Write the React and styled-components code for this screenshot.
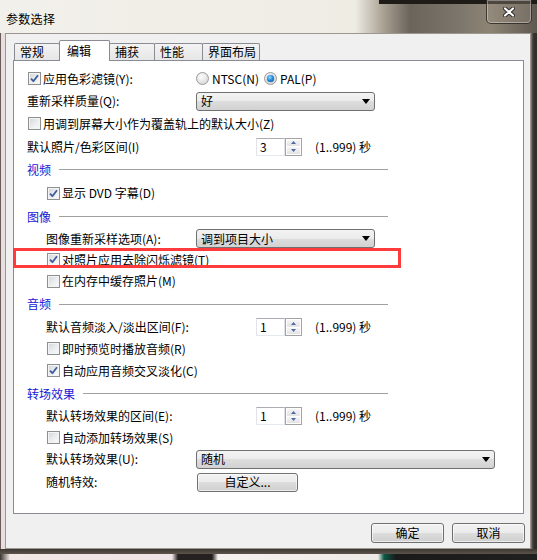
import React from "react";
import styled, { createGlobalStyle } from "styled-components";

const tabs = [
  { label: "常规", w: 46 },
  { label: "编辑", w: 51, active: true },
  { label: "捕获", w: 46 },
  { label: "性能", w: 49 },
  { label: "界面布局", w: 58 },
];

const CheckIcon = () => (
  <svg width="9" height="9" viewBox="0 0 9 9">
    <path d="M1 4.6 L3.4 7.2 L8 1.2" fill="none" stroke="#3f5b9a" strokeWidth="1.8" strokeLinejoin="round" />
  </svg>
);

const Check = ({ checked, children }) => (
  <CheckLabel>
    <Box>{checked && <CheckIcon />}</Box>
    <span>{children}</span>
  </CheckLabel>
);

const Radio = ({ on, children, w }) => (
  <RadioLabel $w={w}>
    <RadioDot $on={on} />
    <span>{children}</span>
  </RadioLabel>
);

const Arrow = () => (
  <svg width="8" height="5" viewBox="0 0 8 5">
    <path d="M0 0 H8 L4 5 Z" fill="#000" />
  </svg>
);

const Dropdown = ({ w, value }) => (
  <Select $w={w}>
    <span>{value}</span>
    <Arrow />
  </Select>
);

const Spinner = ({ value }) => (
  <>
    <Spin>
      <SpinInput>{value}</SpinInput>
      <SpinButtons>
        <SpinHalf>
          <svg width="5" height="3" viewBox="0 0 5 3"><path d="M0 3 L2.5 0 L5 3 Z" fill="#4e6aa6" /></svg>
        </SpinHalf>
        <SpinHalf>
          <svg width="5" height="3" viewBox="0 0 5 3"><path d="M0 0 H5 L2.5 3 Z" fill="#4e6aa6" /></svg>
        </SpinHalf>
      </SpinButtons>
    </Spin>
    <Suffix>(1..999) 秒</Suffix>
  </>
);

const App = () => {
  return (
    <>
      <GlobalStyle />
      <Window>
        <TitleBar>
          <Title>参数选择</Title>
          <Close>
            <svg width="12" height="10" viewBox="0 0 12 10">
              <path d="M2 1.5 L10 8.5 M10 1.5 L2 8.5" stroke="#2b2b2b" strokeWidth="4" strokeLinecap="round" />
              <path d="M2 1.5 L10 8.5 M10 1.5 L2 8.5" stroke="#fff" strokeWidth="2.2" strokeLinecap="round" />
            </svg>
          </Close>
        </TitleBar>

        <Client>
          <TabRow>
            {tabs.map((t) => (
              <Tab key={t.label} $w={t.w} $active={t.active}>
                {t.label}
              </Tab>
            ))}
          </TabRow>

          <Panel>
            <Row $h={23}>
              <LabelCell>
                <Check checked>应用色彩滤镜(Y):</Check>
              </LabelCell>
              <Radio w={68}>NTSC(N)</Radio>
              <Radio on>PAL(P)</Radio>
            </Row>
            <Row $h={22}>
              <LabelCell>重新采样质量(Q):</LabelCell>
              <Dropdown w={179} value="好" />
            </Row>
            <Row $h={23}>
              <Check>用调到屏幕大小作为覆盖轨上的默认大小(Z)</Check>
            </Row>
            <Row $h={23}>
              <LabelCell>默认照片/色彩区间(I)</LabelCell>
              <Spinner value="3" />
            </Row>

            <Section $h={23}>视频</Section>
            <Row $h={24} $indent>
              <Check checked>显示 DVD 字幕(D)</Check>
            </Row>

            <Section $h={23}>图像</Section>
            <Row $h={21} $indent>
              <LabelCell $indent>图像重新采样选项(A):</LabelCell>
              <Dropdown w={179} value="调到项目大小" />
            </Row>
            <Row $h={21} $indent>
              <Check checked>对照片应用去除闪烁滤镜(T)</Check>
            </Row>
            <Row $h={22} $indent>
              <Check>在内存中缓存照片(M)</Check>
            </Row>

            <Section $h={24}>音频</Section>
            <Row $h={22} $indent>
              <LabelCell $indent>默认音频淡入/淡出区间(F):</LabelCell>
              <Spinner value="1" />
            </Row>
            <Row $h={21} $indent>
              <Check>即时预览时播放音频(R)</Check>
            </Row>
            <Row $h={23} $indent>
              <Check checked>自动应用音频交叉淡化(C)</Check>
            </Row>

            <Section $h={23}>转场效果</Section>
            <Row $h={22} $indent>
              <LabelCell $indent>默认转场效果的区间(E):</LabelCell>
              <Spinner value="1" />
            </Row>
            <Row $h={21} $indent>
              <Check>自动添加转场效果(S)</Check>
            </Row>
            <Row $h={22} $indent>
              <LabelCell $indent>默认转场效果(U):</LabelCell>
              <Dropdown w={299} value="随机" />
            </Row>
            <Row $h={24} $indent>
              <LabelCell $indent>随机特效:</LabelCell>
              <PushButton $w={101} $h={19} $offset={1}>自定义...</PushButton>
            </Row>

            <Highlight />
          </Panel>

          <ButtonRow>
            <PushButton $w={73} $h={20}>确定</PushButton>
            <PushButton $w={73} $h={20}>取消</PushButton>
          </ButtonRow>
        </Client>

        <BottomEdge />
      </Window>
    </>
  );
};

export default App;

const GlobalStyle = createGlobalStyle`
  html, body {
    margin: 0;
    padding: 0;
  }
  body {
    width: 537px;
    height: 560px;
    overflow: hidden;
    background: #2a2521;
    color: #000;
    font-family: "Noto Sans CJK SC", "Noto Sans", sans-serif;
    font-size: 12px;
  }
`;

const Window = styled.div`
  display: flex;
  flex-direction: column;
  width: 537px;
  height: 560px;
  background: linear-gradient(
    90deg,
    #6b5a57 0,
    #6b5a57 1px,
    #e6dfdf 1px,
    #e6dfdf 5px,
    #4a443e 5px,
    #8d877f 531px,
    #5a544d 532px,
    #332e29 534px
  );
`;

const TitleBar = styled.div`
  display: flex;
  flex: none;
  align-items: center;
  justify-content: space-between;
  height: 33px;
  padding-left: 6px;
  background:
    linear-gradient(#1f1c18, #1f1c18) right top / 158px 4px no-repeat,
    linear-gradient(
      90deg,
      #f2f0eb 0,
      #efece4 355px,
      #a59d8f 385px,
      #6a645b 410px,
      #7a746b 455px,
      #8d8474 490px,
      #5e5850 537px
    );
`;

const Title = styled.span`
  margin-top: 3px;
  font-size: 12px;
  letter-spacing: 0.3px;
`;

const Close = styled.div`
  display: flex;
  align-items: center;
  justify-content: center;
  align-self: flex-start;
  box-sizing: border-box;
  width: 46px;
  height: 24px;
  margin-right: 5px;
  border: 1px solid rgba(40, 36, 30, 0.8);
  border-top: none;
  border-radius: 0 0 5px 5px;
  background: rgba(160, 150, 135, 0.35);
  box-shadow: inset 0 0 0 1px rgba(255, 255, 255, 0.35);
`;

const Client = styled.div`
  display: flex;
  flex-direction: column;
  box-sizing: border-box;
  height: 516px;
  margin: 0 6px 0 5px;
  padding: 6px 6px 0 7px;
  background: #f0f0f0;
  border: 1px solid #9c9791;
`;

const TabRow = styled.div`
  display: flex;
  align-items: flex-end;
  height: 20px;
  padding-left: 1px;
`;

const Tab = styled.div`
  position: relative;
  z-index: ${(p) => (p.$active ? 2 : 1)};
  box-sizing: border-box;
  width: ${(p) => p.$w}px;
  height: ${(p) => (p.$active ? 21 : 17)}px;
  margin-left: -1px;
  margin-bottom: ${(p) => (p.$active ? -1 : 0)}px;
  padding-left: ${(p) => (p.$active ? 7 : 5)}px;
  display: flex;
  align-items: center;
  border: 1px solid #898c95;
  border-bottom: none;
  border-radius: 2px 2px 0 0;
  background: ${(p) => (p.$active ? "#fff" : "linear-gradient(#f3f3f3, #e6e6e6)")};
  line-height: 1;
  &:first-child {
    margin-left: 0;
  }
`;

const Panel = styled.div`
  position: relative;
  box-sizing: border-box;
  height: 454px;
  padding: 6px 0 0 13px;
  background: #fff;
  border: 1px solid #898c95;
  line-height: 1;
  white-space: nowrap;
`;

const Row = styled.div`
  display: flex;
  align-items: center;
  height: ${(p) => p.$h}px;
  padding-left: ${(p) => (p.$indent ? 19 : 0)}px;
`;

const LabelCell = styled.div`
  display: flex;
  flex: none;
  align-items: center;
  width: ${(p) => (p.$indent ? 150 : 169)}px;
`;

const Section = styled.div`
  display: flex;
  align-items: center;
  gap: 8px;
  width: 361px;
  height: ${(p) => p.$h}px;
  color: #1717d4;
  &::after {
    content: "";
    flex: 1;
    height: 1px;
    background: #a0a0a0;
  }
`;

const CheckLabel = styled.label`
  display: inline-flex;
  align-items: center;
  gap: 2px;
  margin-left: 1px;
`;

const Box = styled.span`
  display: inline-flex;
  align-items: center;
  justify-content: center;
  box-sizing: border-box;
  width: 13px;
  height: 13px;
  border: 1px solid #8e8f8f;
  background: linear-gradient(135deg, #d2d4d8 0, #eceef0 55%, #fafafa 100%);
  box-shadow: inset 0 0 0 1px #f4f4f4;
`;

const RadioLabel = styled.label`
  display: inline-flex;
  align-items: center;
  gap: 3px;
  width: ${(p) => (p.$w ? `${p.$w}px` : "auto")};
`;

const RadioDot = styled.span`
  display: inline-flex;
  align-items: center;
  justify-content: center;
  box-sizing: border-box;
  width: 13px;
  height: 13px;
  border-radius: 50%;
  border: 1px solid #9a9a9a;
  background: radial-gradient(circle at 40% 35%, #fdfdfd 0, #e2e2e2 60%, #cdcdcd 100%);
  &::after {
    content: "";
    display: ${(p) => (p.$on ? "block" : "none")};
    width: 7px;
    height: 7px;
    border-radius: 50%;
    background: radial-gradient(circle at 40% 35%, #8fdcff 0, #1f86d6 50%, #0b4a8f 100%);
    box-shadow: 0 0 1px #0b4a8f;
  }
`;

const Select = styled.div`
  display: flex;
  align-items: center;
  justify-content: space-between;
  box-sizing: border-box;
  width: ${(p) => p.$w}px;
  height: 19px;
  padding: 0 4px 0 4px;
  border: 1px solid #707070;
  border-radius: 3px;
  background: linear-gradient(#f3f3f3 0, #ebebeb 50%, #dddddd 50%, #d2d2d2 100%);
`;

const Spin = styled.div`
  display: flex;
  flex: none;
  width: 46px;
  height: 18px;
  margin-left: 60px;
`;

const SpinInput = styled.div`
  display: flex;
  align-items: center;
  box-sizing: border-box;
  width: 29px;
  padding-left: 3px;
  background: #fff;
  border: 1px solid;
  border-color: #abadb3 #e2e3ea #e3e9ef #e2e3ea;
`;

const SpinButtons = styled.div`
  display: flex;
  flex-direction: column;
  box-sizing: border-box;
  width: 17px;
  border: 1px solid #a3a3a3;
  background: #fff;
`;

const SpinHalf = styled.div`
  display: flex;
  flex: 1;
  align-items: center;
  justify-content: center;
  margin: 1px 1px 0;
  background: linear-gradient(#f5f5f5, #e2e2e2);
  &:last-child {
    margin-bottom: 1px;
  }
`;

const Suffix = styled.span`
  margin-left: 13px;
`;

const PushButton = styled.button`
  box-sizing: border-box;
  width: ${(p) => p.$w}px;
  height: ${(p) => p.$h}px;
  margin-left: ${(p) => p.$offset || 0}px;
  padding: 0;
  border: 1px solid #707070;
  border-radius: 3px;
  background: linear-gradient(#f2f2f2 0, #ebebeb 50%, #dddddd 50%, #cfcfcf 100%);
  box-shadow: inset 0 0 0 1px rgba(255, 255, 255, 0.6);
  color: #000;
  font: inherit;
  line-height: 1;
`;

const Highlight = styled.div`
  position: absolute;
  left: -1px;
  top: 187px;
  box-sizing: border-box;
  width: 388px;
  height: 20px;
  border: 3px solid #ff3b3b;
  pointer-events: none;
`;

const ButtonRow = styled.div`
  display: flex;
  justify-content: flex-end;
  gap: 8px;
  margin: 9px -1px 0 0;
`;

const BottomEdge = styled.div`
  flex: 1;
  background:
    linear-gradient(#3d3732, #5c544b) left top / 100% 5px no-repeat,
    linear-gradient(
      90deg,
      #3a342f 0,
      #f1e7e4 10px,
      #efe3e5 172px,
      #242120 178px,
      #242120 212px,
      #f4f1ee 218px,
      #eeeae6 378px,
      #0c5946 384px,
      #1a1a1a 396px,
      #202020 100%
    );
`;
